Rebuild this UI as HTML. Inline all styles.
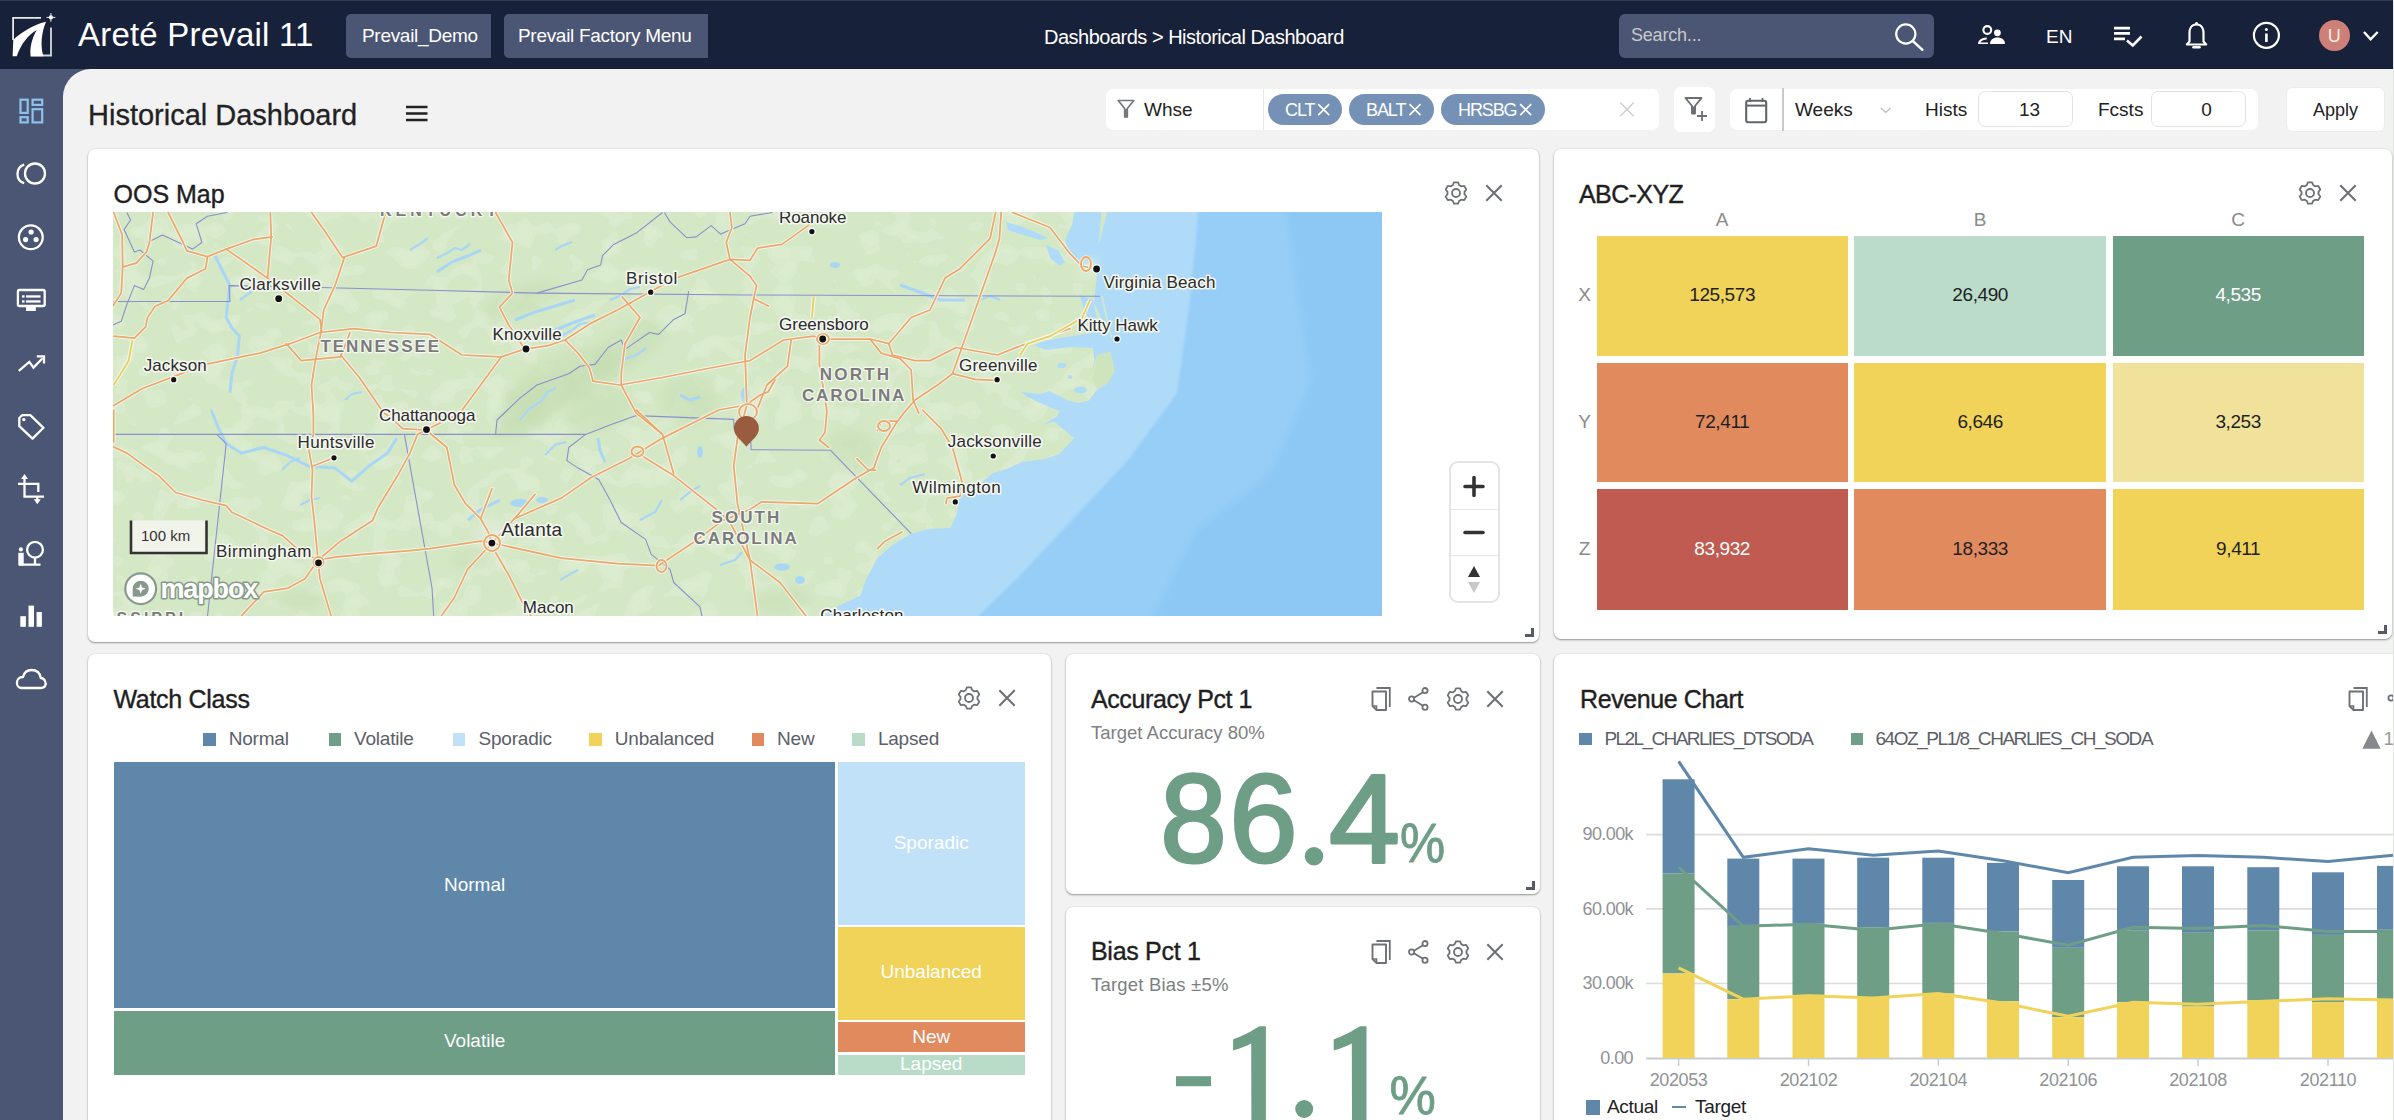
<!DOCTYPE html>
<html><head><meta charset="utf-8">
<style>
*{box-sizing:border-box;margin:0;padding:0}
html,body{width:2394px;height:1120px;overflow:hidden;background:#f2f2f2;font-family:"Liberation Sans",sans-serif;color:#222}
.abs{position:absolute}
#hdr{position:absolute;left:0;top:0;width:2394px;height:69px;background:#18213a;border-top:1px solid #343c50}
#side{position:absolute;left:0;top:69px;width:63px;height:1051px;background:#4b5675}
#main{position:absolute;left:63px;top:69px;width:2331px;height:1051px;background:#f2f2f2;border-top-left-radius:28px}
.hbtn{position:absolute;top:13px;height:44px;background:#4b5675;border-radius:5px 0 0 5px;color:#fff;font-size:19px;letter-spacing:-0.3px;line-height:44px;padding-left:16px}
.panel{position:absolute;background:#fff;border-radius:7px;box-shadow:0 1px 2px rgba(0,0,0,.38),0 0 2px rgba(0,0,0,.10)}
.ptitle{position:absolute;font-size:25px;color:#1f1f1f;letter-spacing:0px;white-space:nowrap;-webkit-text-stroke:0.35px #1f1f1f}
.grip{position:absolute;width:9px;height:9px;border-right:3px solid #555a66;border-bottom:3px solid #555a66}
.fbox{position:absolute;background:#fff;border-radius:7px}
.chip{position:absolute;top:94px;height:31px;border-radius:16px;background:#7591b6;color:#fff;font-size:18px;line-height:32px;padding-left:17px;letter-spacing:-1.1px}
.lbl{position:absolute;white-space:nowrap}
</style></head><body>

<div id="hdr">
<svg class="abs" style="left:8px;top:9px" width="52" height="52" viewBox="0 0 52 52">
<path d="M33,7.8 H5.1 V30" fill="none" stroke="#e8e8e8" stroke-width="1.8"/>
<path d="M43,17.6 V45.5 H22.7" fill="none" stroke="#d8d8d8" stroke-width="1.8"/>
<path d="M38,11.8 C25,15 14,22 5.3,29.7 L4.6,46.2 L8.8,46.2 C13,34 20,25 28.8,20 C24,28 21.5,38 22.7,46.2 L35.3,46.2 C32.5,36 33,24 38,11.8 Z" fill="#fff"/>
<circle cx="42.9" cy="7.4" r="2.1" fill="#fff"/>
<path d="M42.9,3 V11.8 M38.5,7.4 H47.3" stroke="#fff" stroke-width="0.9"/>
</svg>
<div class="lbl" style="left:78px;top:15px;font-size:33px;color:#fff;letter-spacing:0.2px;line-height:38px">Areté Prevail 11</div>
<div class="hbtn" style="left:346px;width:145px">Prevail_Demo</div>
<div class="hbtn" style="left:504px;width:204px;padding-left:14px">Prevail Factory Menu</div>
<div class="lbl" style="left:1044px;top:23.5px;font-size:20px;color:#fff;letter-spacing:-0.5px;line-height:24px">Dashboards &gt; Historical Dashboard</div>
<div class="abs" style="left:1619px;top:13px;width:315px;height:44px;background:#4b5675;border-radius:6px"></div>
<div class="lbl" style="left:1631px;top:23px;font-size:18px;color:#c9c9c9;letter-spacing:-0.2px;line-height:22px">Search...</div>
<svg class="abs" style="left:1890px;top:18px" width="40" height="36" viewBox="0 0 40 36">
<circle cx="15.8" cy="15" r="9.6" fill="none" stroke="#fff" stroke-width="2.2"/>
<path d="M22.8,22 L32.5,30.8" stroke="#fff" stroke-width="2.4" stroke-linecap="round"/>
</svg>
<svg class="abs" style="left:1975px;top:21.3px" width="32" height="24" viewBox="0 0 32 24">
<circle cx="12.3" cy="8" r="3.9" fill="none" stroke="#fff" stroke-width="2.1"/>
<circle cx="22.4" cy="10.8" r="3.4" fill="#fff"/>
<path d="M15,22 C15,18 18,15.5 22.5,15.5 C27,15.5 30,18 30,22 Z" fill="#fff"/>
<path d="M3,22 C3,18.5 6,15.8 12,15.6 L11.5,17.5 C7.5,17.8 5.6,19.5 5.3,20.5 L13,20.5 L13,22 Z" fill="#fff"/>
</svg>
<div class="lbl" style="left:2046px;top:24.5px;font-size:19px;color:#fff;line-height:22px">EN</div>
<svg class="abs" style="left:2110px;top:21px" width="36" height="26" viewBox="0 0 36 26">
<path d="M4,6.2 H20 M4,11.4 H20 M4,16.9 H15" stroke="#fff" stroke-width="2.8"/>
<path d="M17,18.5 L22.8,23.5 L31.5,14.5" fill="none" stroke="#fff" stroke-width="2.6"/>
</svg>
<svg class="abs" style="left:2182px;top:19px" width="30" height="32" viewBox="0 0 30 32">
<path d="M14.5,4.5 C9,4.5 7.5,9 7.5,13 V21.5 L4.8,24.5 H24.2 L21.5,21.5 V13 C21.5,9 20,4.5 14.5,4.5 Z" fill="none" stroke="#fff" stroke-width="2.2" stroke-linejoin="round"/>
<circle cx="14.5" cy="3.6" r="1.6" fill="#fff"/>
<path d="M11.5,27.3 H17.5" stroke="#fff" stroke-width="2.6" stroke-linecap="round"/>
</svg>
<svg class="abs" style="left:2250px;top:18px" width="33" height="33" viewBox="0 0 33 33">
<circle cx="16.4" cy="16.3" r="12.5" fill="none" stroke="#fff" stroke-width="2.2"/>
<circle cx="16.4" cy="10.6" r="1.5" fill="#fff"/>
<path d="M16.4,14.5 V23" stroke="#fff" stroke-width="2.6"/>
</svg>
<div class="abs" style="left:2318.5px;top:19px;width:31.4px;height:31.4px;border-radius:50%;background:#cd7f78"></div>
<div class="lbl" style="left:2318.5px;top:23.5px;width:31.4px;text-align:center;font-size:18px;color:#f7efdc;line-height:22px">U</div>
<svg class="abs" style="left:2360px;top:24.5px" width="22" height="18" viewBox="0 0 22 18">
<path d="M4,6 L10.6,13.3 L17.7,6" fill="none" stroke="#fff" stroke-width="2.4"/>
</svg>
</div>


<div id="side"></div>
<div class="abs" style="left:60px;top:69px;width:40px;height:40px;background:#4b5675"></div>
<svg class="abs" style="left:0;top:69px" width="63" height="660" viewBox="0 69 63 660">
<g fill="none" stroke="#8ec2ea" stroke-width="2.2">
<rect x="20.5" y="99.7" width="7.2" height="13.2"/>
<rect x="32.6" y="99.7" width="9.6" height="5.2"/>
<rect x="20.5" y="117.2" width="7.2" height="5.2"/>
<rect x="32.6" y="109.2" width="9.6" height="13.2"/>
</g>
<g fill="none" stroke="#fff" stroke-width="2.3">
<circle cx="35" cy="173.5" r="10"/>
<path d="M24.2,164.6 A9.8,9.8 0 0 0 24.2,183.2"/>
<circle cx="30.8" cy="237.3" r="11.9"/>
<rect x="17.9" y="290" width="26.8" height="16" rx="1.5"/>
<path d="M18.8,370.8 L29.3,361.9 L33.5,367.6 L42.5,358.3"/>
<path d="M36.8,356.3 H44 V363.5" />
<path d="M19.3,418 L19.3,426.2 L32.5,438.6 L43.5,427.8 L30.3,415.2 L22,415.2 Z" stroke-linejoin="round"/>
<path d="M18,483.8 H38.3 V492 M24.5,478 V496.6 H44" />
<circle cx="35" cy="549.7" r="7.9"/>
<path d="M35,557.6 V564.2 M19,564.6 H40.5"/>
<path d="M21.5,688 H40.5 C45,688 46.8,684.5 45,681 C44,678.8 42.5,678 40.8,678 C40,672.5 36.2,670 31.5,670 C27,670 24,673 23,677 C19,677 16.9,679.8 16.9,682.8 C16.9,685.8 19,688 21.5,688 Z" stroke-linejoin="round"/>
</g>
<g fill="#fff">
<circle cx="31.1" cy="232" r="2.6"/><circle cx="25.6" cy="239.6" r="2.6"/><circle cx="36.1" cy="239.6" r="2.6"/>
<rect x="22" y="295.3" width="2.6" height="2.3"/><rect x="26" y="295.3" width="14.5" height="2.3"/>
<rect x="22" y="300.3" width="2.6" height="2.3"/><rect x="26" y="300.3" width="14.5" height="2.3"/>
<rect x="26" y="307" width="9.8" height="4"/>
<circle cx="23.8" cy="419.6" r="1.7"/>
<path d="M24.5,474 L28,479 L21,479 Z M37.3,504.3 L33.8,499.3 L40.8,499.3 Z"/><rect x="36.2" y="496" width="2.2" height="4"/>
<circle cx="20.9" cy="549.4" r="2.1"/>
<rect x="18.3" y="552.8" width="5.4" height="12.6"/>
<rect x="20.3" y="616.2" width="5.6" height="10.6"/>
<rect x="28.5" y="605.6" width="5.5" height="21.2"/>
<rect x="36.6" y="612" width="5.3" height="14.8"/>
</g>
</svg>
<div id="main"></div>
<div class="lbl" style="left:88px;top:98px;font-size:29px;color:#222;line-height:34px;-webkit-text-stroke:0.3px #222">Historical Dashboard</div>
<svg class="abs" style="left:400px;top:100px" width="34" height="28" viewBox="0 0 34 28">
<path d="M6,7 H27.5 M6,13.5 H27.5 M6,20 H27.5" stroke="#222" stroke-width="2.4"/>
</svg>
<!-- filter bar -->
<div class="fbox" style="left:1106px;top:89px;width:553px;height:41px"></div>
<div class="abs" style="left:1263px;top:89px;width:1px;height:41px;background:#e8e8e8"></div>
<svg class="abs" style="left:1114px;top:96px" width="24" height="26" viewBox="0 0 24 26">
<path d="M4.2,4.5 H19.8 L13.3,12.5 V21 H10.7 V12.5 Z" fill="none" stroke="#76787c" stroke-width="1.7" stroke-linejoin="round"/>
<rect x="10.6" y="13" width="2.8" height="8.2" fill="#76787c"/>
</svg>
<div class="lbl" style="left:1144px;top:99px;font-size:19px;color:#222;line-height:22px">Whse</div>
<div class="chip" style="left:1268px;width:74px">CLT</div>
<div class="chip" style="left:1349px;width:85px">BALT</div>
<div class="chip" style="left:1441px;width:104px">HRSBG</div>
<svg class="abs" style="left:1268px;top:94px" width="280" height="31" viewBox="0 0 280 31">
<path d="M50.2,10.2 L61.2,21.2 M61.2,10.2 L50.2,21.2 M141.5,10.2 L152.5,21.2 M152.5,10.2 L141.5,21.2 M252.2,10.2 L263.2,21.2 M263.2,10.2 L252.2,21.2" stroke="#fff" stroke-width="1.7"/>
</svg>
<svg class="abs" style="left:1614px;top:97px" width="26" height="26" viewBox="0 0 26 26">
<path d="M6.2,5.5 L19.8,19.2 M19.8,5.5 L6.2,19.2" stroke="#cfcfcf" stroke-width="1.6"/>
</svg>
<div class="fbox" style="left:1674px;top:87px;width:41px;height:45px"></div>
<svg class="abs" style="left:1674px;top:87px" width="41" height="45" viewBox="0 0 41 45">
<path d="M11.5,11 H27.5 L21,19 V26.5 H18 V19 Z" fill="none" stroke="#6b6f75" stroke-width="1.9" stroke-linejoin="round"/>
<rect x="17.9" y="19.5" width="3.3" height="7.5" fill="#6b6f75"/>
<path d="M23,29 H33 M28,24 V34" stroke="#6b6f75" stroke-width="1.8"/>
</svg>
<div class="fbox" style="left:1730px;top:89px;width:528px;height:41px"></div>
<div class="abs" style="left:1782px;top:88px;width:1.5px;height:43px;background:#c8c8c8"></div>
<svg class="abs" style="left:1740px;top:92px" width="34" height="36" viewBox="0 0 34 36">
<rect x="6.2" y="8.8" width="20" height="21.4" rx="2" fill="none" stroke="#60646b" stroke-width="2.1"/>
<path d="M6.2,13.6 H26.2" stroke="#60646b" stroke-width="2"/>
<path d="M10,6 V10 M22.5,6 V10" stroke="#60646b" stroke-width="1.8"/>
</svg>
<div class="lbl" style="left:1795px;top:99px;font-size:19px;color:#222;line-height:22px">Weeks</div>
<svg class="abs" style="left:1876px;top:100px" width="20" height="20" viewBox="0 0 20 20">
<path d="M5,8 L9.7,12.5 L14.5,8" fill="none" stroke="#b8bcbc" stroke-width="1.2"/>
</svg>
<div class="lbl" style="left:1925px;top:99px;font-size:19px;color:#222;line-height:22px">Hists</div>
<div class="abs" style="left:1978px;top:91px;width:95px;height:36px;border:1px solid #e2e2e2;border-radius:7px"></div>
<div class="lbl" style="left:1982px;top:99px;width:95px;text-align:center;font-size:19px;color:#222;line-height:22px">13</div>
<div class="lbl" style="left:2098px;top:99px;font-size:19px;color:#222;line-height:22px">Fcsts</div>
<div class="abs" style="left:2151px;top:91px;width:95px;height:36px;border:1px solid #e2e2e2;border-radius:7px"></div>
<div class="lbl" style="left:2159px;top:99px;width:95px;text-align:center;font-size:19px;color:#222;line-height:22px">0</div>
<div class="fbox" style="left:2286px;top:87px;width:99px;height:45px;border:1px solid #ececec"></div>
<div class="lbl" style="left:2286px;top:99px;width:99px;text-align:center;font-size:18px;color:#222;line-height:22px">Apply</div>

<div class="panel" style="left:88px;top:149px;width:1451px;height:493px"></div><div class="panel" style="left:1554px;top:149px;width:838px;height:490px"></div><div class="panel" style="left:88px;top:654px;width:963px;height:486px"></div><div class="panel" style="left:1066px;top:654px;width:474px;height:240px"></div><div class="panel" style="left:1066px;top:907px;width:474px;height:233px"></div><div class="panel" style="left:1554px;top:654px;width:866px;height:486px"></div><div class="lbl" style="left:113.5px;top:181.8px;font-size:25px;line-height:25px;color:#1f1f1f;-webkit-text-stroke:0.4px #1f1f1f;">OOS Map</div><div class="lbl" style="left:1579.0px;top:181.5px;font-size:25px;line-height:25px;color:#1f1f1f;-webkit-text-stroke:0.4px #1f1f1f;letter-spacing:-0.6px;">ABC-XYZ</div><div class="lbl" style="left:113.5px;top:687.4px;font-size:25px;line-height:25px;color:#1f1f1f;-webkit-text-stroke:0.4px #1f1f1f;letter-spacing:-0.3px;">Watch Class</div><div class="lbl" style="left:1091.0px;top:687.4px;font-size:25px;line-height:25px;color:#1f1f1f;-webkit-text-stroke:0.4px #1f1f1f;letter-spacing:-0.4px;">Accuracy Pct 1</div><div class="lbl" style="left:1091.0px;top:939.3px;font-size:25px;line-height:25px;color:#1f1f1f;-webkit-text-stroke:0.4px #1f1f1f;letter-spacing:-0.3px;">Bias Pct 1</div><div class="lbl" style="left:1580.0px;top:687.4px;font-size:25px;line-height:25px;color:#1f1f1f;-webkit-text-stroke:0.4px #1f1f1f;letter-spacing:-0.4px;">Revenue Chart</div><svg class="abs" style="left:1440.5px;top:177.5px" width="30" height="30" viewBox="1440.5 177.5 30 30"><path d="M1452.23,184.76 L1453.44,181.80 L1457.56,181.80 L1458.77,184.76 L1459.83,185.01 L1460.56,185.80 L1463.74,185.37 L1465.80,188.93 L1463.84,191.46 L1464.15,192.50 L1463.84,193.54 L1465.80,196.07 L1463.74,199.63 L1460.56,199.20 L1459.83,199.99 L1458.77,200.24 L1457.56,203.20 L1453.44,203.20 L1452.23,200.24 L1451.17,199.99 L1450.44,199.20 L1447.26,199.63 L1445.20,196.07 L1447.16,193.54 L1446.85,192.50 L1447.16,191.46 L1445.20,188.93 L1447.26,185.37 L1450.44,185.80 L1451.17,185.01 Z" fill="none" stroke="#6d7177" stroke-width="1.8" stroke-linejoin="round"/><circle cx="1455.5" cy="192.5" r="4.0" fill="none" stroke="#6d7177" stroke-width="1.8"/></svg><svg class="abs" style="left:1482px;top:180.5px" width="24" height="24" viewBox="1482 180.5 24 24"><path d="M1486.3,184.8 L1501.7,200.2 M1501.7,184.8 L1486.3,200.2" stroke="#6d7177" stroke-width="2.1"/></svg><svg class="abs" style="left:2295px;top:177.5px" width="30" height="30" viewBox="2295 177.5 30 30"><path d="M2306.73,184.76 L2307.94,181.80 L2312.06,181.80 L2313.27,184.76 L2314.33,185.01 L2315.06,185.80 L2318.24,185.37 L2320.30,188.93 L2318.34,191.46 L2318.65,192.50 L2318.34,193.54 L2320.30,196.07 L2318.24,199.63 L2315.06,199.20 L2314.33,199.99 L2313.27,200.24 L2312.06,203.20 L2307.94,203.20 L2306.73,200.24 L2305.67,199.99 L2304.94,199.20 L2301.76,199.63 L2299.70,196.07 L2301.66,193.54 L2301.35,192.50 L2301.66,191.46 L2299.70,188.93 L2301.76,185.37 L2304.94,185.80 L2305.67,185.01 Z" fill="none" stroke="#6d7177" stroke-width="1.8" stroke-linejoin="round"/><circle cx="2310" cy="192.5" r="4.0" fill="none" stroke="#6d7177" stroke-width="1.8"/></svg><svg class="abs" style="left:2335.8px;top:180.5px" width="24" height="24" viewBox="2335.8 180.5 24 24"><path d="M2340.1000000000004,184.8 L2355.5,200.2 M2355.5,184.8 L2340.1000000000004,200.2" stroke="#6d7177" stroke-width="2.1"/></svg><svg class="abs" style="left:953.8px;top:683.2px" width="30" height="30" viewBox="953.8 683.2 30 30"><path d="M965.53,690.46 L966.74,687.50 L970.86,687.50 L972.07,690.46 L973.13,690.71 L973.86,691.50 L977.04,691.07 L979.10,694.63 L977.14,697.16 L977.45,698.20 L977.14,699.24 L979.10,701.77 L977.04,705.33 L973.86,704.90 L973.13,705.69 L972.07,705.94 L970.86,708.90 L966.74,708.90 L965.53,705.94 L964.47,705.69 L963.74,704.90 L960.56,705.33 L958.50,701.77 L960.46,699.24 L960.15,698.20 L960.46,697.16 L958.50,694.63 L960.56,691.07 L963.74,691.50 L964.47,690.71 Z" fill="none" stroke="#6d7177" stroke-width="1.8" stroke-linejoin="round"/><circle cx="968.8" cy="698.2" r="4.0" fill="none" stroke="#6d7177" stroke-width="1.8"/></svg><svg class="abs" style="left:995px;top:686.2px" width="24" height="24" viewBox="995 686.2 24 24"><path d="M999.3,690.5 L1014.7,705.9000000000001 M1014.7,690.5 L999.3,705.9000000000001" stroke="#6d7177" stroke-width="2.1"/></svg><svg class="abs" style="left:1371px;top:685px" width="22" height="27" viewBox="0 0 22 27"><path d="M5.5,3 H18.8 V22" fill="none" stroke="#6d7177" stroke-width="1.8"/><path d="M1.5,6.5 H15 V25 H5.5 L1.5,21 Z" fill="none" stroke="#6d7177" stroke-width="1.9" stroke-linejoin="round"/><path d="M1.5,21 H5.5 V25" fill="none" stroke="#6d7177" stroke-width="1.6"/></svg><svg class="abs" style="left:1408px;top:686.5px" width="22" height="24" viewBox="0 0 22 24"><path d="M4,12 L17,4 M4,12 L17,20" stroke="#6d7177" stroke-width="1.8"/><circle cx="3.6" cy="12" r="2.6" fill="#fff" stroke="#6d7177" stroke-width="1.8"/><circle cx="17" cy="3.6" r="2.6" fill="#fff" stroke="#6d7177" stroke-width="1.8"/><circle cx="17" cy="20.3" r="2.6" fill="#fff" stroke="#6d7177" stroke-width="1.8"/></svg><svg class="abs" style="left:1442.7px;top:683.5px" width="30" height="30" viewBox="1442.7 683.5 30 30"><path d="M1454.43,690.76 L1455.64,687.80 L1459.76,687.80 L1460.97,690.76 L1462.03,691.01 L1462.76,691.80 L1465.94,691.37 L1468.00,694.93 L1466.04,697.46 L1466.35,698.50 L1466.04,699.54 L1468.00,702.07 L1465.94,705.63 L1462.76,705.20 L1462.03,705.99 L1460.97,706.24 L1459.76,709.20 L1455.64,709.20 L1454.43,706.24 L1453.37,705.99 L1452.64,705.20 L1449.46,705.63 L1447.40,702.07 L1449.36,699.54 L1449.05,698.50 L1449.36,697.46 L1447.40,694.93 L1449.46,691.37 L1452.64,691.80 L1453.37,691.01 Z" fill="none" stroke="#6d7177" stroke-width="1.8" stroke-linejoin="round"/><circle cx="1457.7" cy="698.5" r="4.0" fill="none" stroke="#6d7177" stroke-width="1.8"/></svg><svg class="abs" style="left:1483px;top:686.9px" width="24" height="24" viewBox="1483 686.9 24 24"><path d="M1487.3,691.1999999999999 L1502.7,706.6 M1502.7,691.1999999999999 L1487.3,706.6" stroke="#6d7177" stroke-width="2.1"/></svg><svg class="abs" style="left:1371px;top:938px" width="22" height="27" viewBox="0 0 22 27"><path d="M5.5,3 H18.8 V22" fill="none" stroke="#6d7177" stroke-width="1.8"/><path d="M1.5,6.5 H15 V25 H5.5 L1.5,21 Z" fill="none" stroke="#6d7177" stroke-width="1.9" stroke-linejoin="round"/><path d="M1.5,21 H5.5 V25" fill="none" stroke="#6d7177" stroke-width="1.6"/></svg><svg class="abs" style="left:1408px;top:939.5px" width="22" height="24" viewBox="0 0 22 24"><path d="M4,12 L17,4 M4,12 L17,20" stroke="#6d7177" stroke-width="1.8"/><circle cx="3.6" cy="12" r="2.6" fill="#fff" stroke="#6d7177" stroke-width="1.8"/><circle cx="17" cy="3.6" r="2.6" fill="#fff" stroke="#6d7177" stroke-width="1.8"/><circle cx="17" cy="20.3" r="2.6" fill="#fff" stroke="#6d7177" stroke-width="1.8"/></svg><svg class="abs" style="left:1442.7px;top:936.5px" width="30" height="30" viewBox="1442.7 936.5 30 30"><path d="M1454.43,943.76 L1455.64,940.80 L1459.76,940.80 L1460.97,943.76 L1462.03,944.01 L1462.76,944.80 L1465.94,944.37 L1468.00,947.93 L1466.04,950.46 L1466.35,951.50 L1466.04,952.54 L1468.00,955.07 L1465.94,958.63 L1462.76,958.20 L1462.03,958.99 L1460.97,959.24 L1459.76,962.20 L1455.64,962.20 L1454.43,959.24 L1453.37,958.99 L1452.64,958.20 L1449.46,958.63 L1447.40,955.07 L1449.36,952.54 L1449.05,951.50 L1449.36,950.46 L1447.40,947.93 L1449.46,944.37 L1452.64,944.80 L1453.37,944.01 Z" fill="none" stroke="#6d7177" stroke-width="1.8" stroke-linejoin="round"/><circle cx="1457.7" cy="951.5" r="4.0" fill="none" stroke="#6d7177" stroke-width="1.8"/></svg><svg class="abs" style="left:1483px;top:939.9px" width="24" height="24" viewBox="1483 939.9 24 24"><path d="M1487.3,944.1999999999999 L1502.7,959.6 M1502.7,944.1999999999999 L1487.3,959.6" stroke="#6d7177" stroke-width="2.1"/></svg><svg class="abs" style="left:2348px;top:685px" width="22" height="27" viewBox="0 0 22 27"><path d="M5.5,3 H18.8 V22" fill="none" stroke="#6d7177" stroke-width="1.8"/><path d="M1.5,6.5 H15 V25 H5.5 L1.5,21 Z" fill="none" stroke="#6d7177" stroke-width="1.9" stroke-linejoin="round"/><path d="M1.5,21 H5.5 V25" fill="none" stroke="#6d7177" stroke-width="1.6"/></svg><svg class="abs" style="left:2384px;top:690px" width="10" height="16"><circle cx="7" cy="8" r="2.6" fill="#fff" stroke="#6d7177" stroke-width="1.8"/></svg><div class="grip" style="left:1525px;top:628px"></div><div class="grip" style="left:2378px;top:625px"></div><div class="grip" style="left:1526px;top:881px"></div><div class="abs" style="left:1596.5px;top:235.6px;width:251.5px;height:120.4px;background:#f0d358"></div><div class="lbl" style="left:1597.2px;top:285.2px;width:250px;text-align:center;font-size:19px;line-height:19px;color:#1f1f1f;letter-spacing:-0.4px;">125,573</div><div class="abs" style="left:1854.3px;top:235.6px;width:251.7px;height:120.4px;background:#bcdccb"></div><div class="lbl" style="left:1855.2px;top:285.2px;width:250px;text-align:center;font-size:19px;line-height:19px;color:#1f1f1f;letter-spacing:-0.4px;">26,490</div><div class="abs" style="left:2112.5px;top:235.6px;width:251.5px;height:120.4px;background:#6e9e86"></div><div class="lbl" style="left:2113.2px;top:285.2px;width:250px;text-align:center;font-size:19px;line-height:19px;color:#fff;letter-spacing:-0.4px;">4,535</div><div class="abs" style="left:1596.5px;top:362.7px;width:251.5px;height:119.8px;background:#e08a5e"></div><div class="lbl" style="left:1597.2px;top:412.0px;width:250px;text-align:center;font-size:19px;line-height:19px;color:#1f1f1f;letter-spacing:-0.4px;">72,411</div><div class="abs" style="left:1854.3px;top:362.7px;width:251.7px;height:119.8px;background:#f0d358"></div><div class="lbl" style="left:1855.2px;top:412.0px;width:250px;text-align:center;font-size:19px;line-height:19px;color:#1f1f1f;letter-spacing:-0.4px;">6,646</div><div class="abs" style="left:2112.5px;top:362.7px;width:251.5px;height:119.8px;background:#f0e29a"></div><div class="lbl" style="left:2113.2px;top:412.0px;width:250px;text-align:center;font-size:19px;line-height:19px;color:#1f1f1f;letter-spacing:-0.4px;">3,253</div><div class="abs" style="left:1596.5px;top:489.3px;width:251.5px;height:120.3px;background:#c05b51"></div><div class="lbl" style="left:1597.2px;top:538.9px;width:250px;text-align:center;font-size:19px;line-height:19px;color:#fff;letter-spacing:-0.4px;">83,932</div><div class="abs" style="left:1854.3px;top:489.3px;width:251.7px;height:120.3px;background:#e08a5e"></div><div class="lbl" style="left:1855.2px;top:538.9px;width:250px;text-align:center;font-size:19px;line-height:19px;color:#1f1f1f;letter-spacing:-0.4px;">18,333</div><div class="abs" style="left:2112.5px;top:489.3px;width:251.5px;height:120.3px;background:#f0d358"></div><div class="lbl" style="left:2113.2px;top:538.9px;width:250px;text-align:center;font-size:19px;line-height:19px;color:#1f1f1f;letter-spacing:-0.4px;">9,411</div><div class="lbl" style="left:1702.2px;top:209.9px;width:40px;text-align:center;font-size:19px;line-height:19px;color:#8a8a8a;">A</div><div class="lbl" style="left:1960.2px;top:209.9px;width:40px;text-align:center;font-size:19px;line-height:19px;color:#8a8a8a;">B</div><div class="lbl" style="left:2218.2px;top:209.9px;width:40px;text-align:center;font-size:19px;line-height:19px;color:#8a8a8a;">C</div><div class="lbl" style="left:1569.5px;top:285.2px;width:30px;text-align:center;font-size:19px;line-height:19px;color:#8a8a8a;">X</div><div class="lbl" style="left:1569.5px;top:412.0px;width:30px;text-align:center;font-size:19px;line-height:19px;color:#8a8a8a;">Y</div><div class="lbl" style="left:1569.5px;top:538.9px;width:30px;text-align:center;font-size:19px;line-height:19px;color:#8a8a8a;">Z</div><div class="abs" style="left:114.3px;top:762.1px;width:721.2px;height:246.4px;background:#5e87a9"></div><div class="abs" style="left:114.3px;top:1010.5px;width:721.2px;height:64.5px;background:#6e9e86"></div><div class="abs" style="left:837.6px;top:762.1px;width:187.2px;height:162.9px;background:#c1e1f8"></div><div class="abs" style="left:837.6px;top:927px;width:187.2px;height:93.0px;background:#f0d358"></div><div class="abs" style="left:837.6px;top:1022.3px;width:187.2px;height:30.2px;background:#e08a5e"></div><div class="abs" style="left:837.6px;top:1054.6px;width:187.2px;height:20.4px;background:#b8dcc8"></div><div class="lbl" style="left:324.6px;top:874.6px;width:300px;text-align:center;font-size:19px;line-height:19px;color:#fff;">Normal</div><div class="lbl" style="left:324.6px;top:1030.9px;width:300px;text-align:center;font-size:19px;line-height:19px;color:#fff;">Volatile</div><div class="lbl" style="left:841.2px;top:832.9px;width:180px;text-align:center;font-size:19px;line-height:19px;color:#fff;">Sporadic</div><div class="lbl" style="left:841.2px;top:962.4px;width:180px;text-align:center;font-size:19px;line-height:19px;color:#fff;">Unbalanced</div><div class="lbl" style="left:841.2px;top:1026.7px;width:180px;text-align:center;font-size:19px;line-height:19px;color:#fff;">New</div><div class="lbl" style="left:841.2px;top:1053.7px;width:180px;text-align:center;font-size:19px;line-height:19px;color:#fff;">Lapsed</div><div class="abs" style="left:203px;top:733px;width:12.5px;height:12.7px;background:#5e87a9"></div><div class="lbl" style="left:228.7px;top:728.9px;font-size:19px;line-height:19px;color:#5b6068;letter-spacing:-0.2px;">Normal</div><div class="abs" style="left:328.5px;top:733px;width:12.5px;height:12.7px;background:#6e9e86"></div><div class="lbl" style="left:354.0px;top:728.9px;font-size:19px;line-height:19px;color:#5b6068;letter-spacing:-0.2px;">Volatile</div><div class="abs" style="left:452.8px;top:733px;width:12.5px;height:12.7px;background:#c1e1f8"></div><div class="lbl" style="left:478.5px;top:728.9px;font-size:19px;line-height:19px;color:#5b6068;letter-spacing:-0.2px;">Sporadic</div><div class="abs" style="left:589px;top:733px;width:12.5px;height:12.7px;background:#f0d358"></div><div class="lbl" style="left:614.8px;top:728.9px;font-size:19px;line-height:19px;color:#5b6068;letter-spacing:-0.2px;">Unbalanced</div><div class="abs" style="left:751.5px;top:733px;width:12.5px;height:12.7px;background:#e08a5e"></div><div class="lbl" style="left:777.0px;top:728.9px;font-size:19px;line-height:19px;color:#5b6068;letter-spacing:-0.2px;">New</div><div class="abs" style="left:852px;top:733px;width:12.5px;height:12.7px;background:#b8dcc8"></div><div class="lbl" style="left:877.9px;top:728.9px;font-size:19px;line-height:19px;color:#5b6068;letter-spacing:-0.2px;">Lapsed</div><div class="lbl" style="left:1091.0px;top:724.3px;font-size:18.5px;line-height:18.5px;color:#7d7f83;letter-spacing:0px;">Target Accuracy 80%</div><div class="lbl" style="left:1091.0px;top:976.3px;font-size:18.5px;line-height:18.5px;color:#7d7f83;letter-spacing:0.2px;">Target Bias ±5%</div><svg class="abs" style="left:1066px;top:654px" width="474" height="466" viewBox="1066 654 474 466"><g font-family="Liberation Sans, sans-serif" fill="#6e9e86" stroke="#6e9e86" stroke-linejoin="round"><text transform="translate(1160.20,861.80) scale(0.942,0.990)" font-size="127" stroke-width="3.11">8</text><text transform="translate(1229.30,861.80) scale(0.968,0.990)" font-size="127" stroke-width="3.06">6</text><text transform="translate(1329.00,862.80) scale(1.005,0.992)" font-size="127" stroke-width="3.00">4</text><text transform="translate(1400.00,862.00) scale(0.890,0.967)" font-size="57" stroke-width="0.86">%</text><text transform="translate(1389.60,1114.30) scale(0.915,0.933)" font-size="57" stroke-width="0.87">%</text></g><circle cx="1314" cy="856.2" r="9.2" fill="#6e9e86"/><circle cx="1304.2" cy="1109" r="9" fill="#6e9e86"/><rect x="1176" y="1076.2" width="35" height="10" fill="#6e9e86"/><path transform="translate(0,0)" d="M1265.9,1026.2 L1259.4,1026.2 C1252,1031 1242,1036 1233.1,1039.4 L1233.1,1050.6 C1240,1049 1246,1046 1251.2,1043.6 L1251.4,1125 L1265.9,1125 Z" fill="#6e9e86"/><path transform="translate(100.6,0)" d="M1265.9,1026.2 L1259.4,1026.2 C1252,1031 1242,1036 1233.1,1039.4 L1233.1,1050.6 C1240,1049 1246,1046 1251.2,1043.6 L1251.4,1125 L1265.9,1125 Z" fill="#6e9e86"/></svg><svg class="abs" style="left:1554px;top:654px" width="840" height="466" viewBox="1554 654 840 466"><path d="M1646,834.6 H2394" stroke="#dcdcdc" stroke-width="1.6"/><path d="M1646,908.9 H2394" stroke="#dcdcdc" stroke-width="1.6"/><path d="M1646,983.5 H2394" stroke="#dcdcdc" stroke-width="1.6"/><path d="M1646,1058.5 H2394" stroke="#c9cccf" stroke-width="1.8"/><rect x="1662.6" y="779.3" width="32" height="94.30000000000007" fill="#5e87a9"/><rect x="1662.6" y="873.6" width="32" height="99.89999999999998" fill="#6e9e86"/><rect x="1662.6" y="973.5" width="32" height="84.5" fill="#f0d358"/><rect x="1727.3" y="858.6" width="32" height="67.29999999999995" fill="#5e87a9"/><rect x="1727.3" y="925.9" width="32" height="73.30000000000007" fill="#6e9e86"/><rect x="1727.3" y="999.2" width="32" height="58.799999999999955" fill="#f0d358"/><rect x="1792.5" y="858.6" width="32" height="65.19999999999993" fill="#5e87a9"/><rect x="1792.5" y="923.8" width="32" height="71.10000000000002" fill="#6e9e86"/><rect x="1792.5" y="994.9" width="32" height="63.10000000000002" fill="#f0d358"/><rect x="1857.2" y="857.7" width="32" height="69.5" fill="#5e87a9"/><rect x="1857.2" y="927.2" width="32" height="70.69999999999993" fill="#6e9e86"/><rect x="1857.2" y="997.9" width="32" height="60.10000000000002" fill="#f0d358"/><rect x="1922.3" y="857.7" width="32" height="65.19999999999993" fill="#5e87a9"/><rect x="1922.3" y="922.9" width="32" height="70.70000000000005" fill="#6e9e86"/><rect x="1922.3" y="993.6" width="32" height="64.39999999999998" fill="#f0d358"/><rect x="1987" y="862.9" width="32" height="68.60000000000002" fill="#5e87a9"/><rect x="1987" y="931.5" width="32" height="69.79999999999995" fill="#6e9e86"/><rect x="1987" y="1001.3" width="32" height="56.700000000000045" fill="#f0d358"/><rect x="2052.2" y="880" width="32" height="67.79999999999995" fill="#5e87a9"/><rect x="2052.2" y="947.8" width="32" height="69.40000000000009" fill="#6e9e86"/><rect x="2052.2" y="1017.2" width="32" height="40.799999999999955" fill="#f0d358"/><rect x="2117" y="866.3" width="32" height="63.90000000000009" fill="#5e87a9"/><rect x="2117" y="930.2" width="32" height="72.0" fill="#6e9e86"/><rect x="2117" y="1002.2" width="32" height="55.799999999999955" fill="#f0d358"/><rect x="2182" y="866.3" width="32" height="66.5" fill="#5e87a9"/><rect x="2182" y="932.8" width="32" height="73.70000000000005" fill="#6e9e86"/><rect x="2182" y="1006.5" width="32" height="51.5" fill="#f0d358"/><rect x="2247.3" y="867.2" width="32" height="63.0" fill="#5e87a9"/><rect x="2247.3" y="930.2" width="32" height="69.79999999999995" fill="#6e9e86"/><rect x="2247.3" y="1000" width="32" height="58" fill="#f0d358"/><rect x="2312" y="872.3" width="32" height="62.60000000000002" fill="#5e87a9"/><rect x="2312" y="934.9" width="32" height="67.30000000000007" fill="#6e9e86"/><rect x="2312" y="1002.2" width="32" height="55.799999999999955" fill="#f0d358"/><rect x="2377" y="865.9" width="32" height="63.89999999999998" fill="#5e87a9"/><rect x="2377" y="929.8" width="32" height="69.40000000000009" fill="#6e9e86"/><rect x="2377" y="999.2" width="32" height="58.799999999999955" fill="#f0d358"/><polyline fill="none" stroke="#5e87a9" stroke-width="3" points="1678.6,761.3 1743.3,857.3 1808.5,848.7 1873.2,855.2 1938.3,850.9 2003,860.7 2068.2,872.7 2133,857.3 2198,855.6 2263.3,857.3 2328,861.6 2393,855.2"/><polyline fill="none" stroke="#6e9e86" stroke-width="3" points="1678.6,867.2 1743.3,926.3 1808.5,924.2 1873.2,930.2 1938.3,923.8 2003,933.6 2068.2,945.2 2133,927.2 2198,928.5 2263.3,925.5 2328,931.5 2393,931.5"/><polyline fill="none" stroke="#f0d358" stroke-width="3" points="1678.6,967.9 1743.3,999.2 1808.5,995.8 1873.2,997.9 1938.3,993.6 2003,1003 2068.2,1016.3 2133,1002.2 2198,1004.3 2263.3,1001.3 2328,998.8 2393,1000"/><path d="M1678.6,1059 V1066" stroke="#c9cccf" stroke-width="1.5"/><path d="M1808.5,1059 V1066" stroke="#c9cccf" stroke-width="1.5"/><path d="M1938.3,1059 V1066" stroke="#c9cccf" stroke-width="1.5"/><path d="M2068.2,1059 V1066" stroke="#c9cccf" stroke-width="1.5"/><path d="M2198,1059 V1066" stroke="#c9cccf" stroke-width="1.5"/><path d="M2328,1059 V1066" stroke="#c9cccf" stroke-width="1.5"/><path d="M2362.3,748.8 L2371.5,730.5 L2380.6,748.8 Z" fill="#85898d"/></svg><div class="lbl" style="left:1533.0px;top:825.2px;width:100px;text-align:right;font-size:18px;line-height:18px;color:#8f9295;letter-spacing:-0.6px;">90.00k</div><div class="lbl" style="left:1533.0px;top:899.5px;width:100px;text-align:right;font-size:18px;line-height:18px;color:#8f9295;letter-spacing:-0.6px;">60.00k</div><div class="lbl" style="left:1533.0px;top:974.1px;width:100px;text-align:right;font-size:18px;line-height:18px;color:#8f9295;letter-spacing:-0.6px;">30.00k</div><div class="lbl" style="left:1533.0px;top:1049.1px;width:100px;text-align:right;font-size:18px;line-height:18px;color:#8f9295;letter-spacing:-0.6px;">0.00</div><div class="lbl" style="left:1618.6px;top:1070.6px;width:120px;text-align:center;font-size:18px;line-height:18px;color:#8f9295;letter-spacing:-0.4px;">202053</div><div class="lbl" style="left:1748.5px;top:1070.6px;width:120px;text-align:center;font-size:18px;line-height:18px;color:#8f9295;letter-spacing:-0.4px;">202102</div><div class="lbl" style="left:1878.3px;top:1070.6px;width:120px;text-align:center;font-size:18px;line-height:18px;color:#8f9295;letter-spacing:-0.4px;">202104</div><div class="lbl" style="left:2008.2px;top:1070.6px;width:120px;text-align:center;font-size:18px;line-height:18px;color:#8f9295;letter-spacing:-0.4px;">202106</div><div class="lbl" style="left:2138.0px;top:1070.6px;width:120px;text-align:center;font-size:18px;line-height:18px;color:#8f9295;letter-spacing:-0.4px;">202108</div><div class="lbl" style="left:2268.0px;top:1070.6px;width:120px;text-align:center;font-size:18px;line-height:18px;color:#8f9295;letter-spacing:-0.4px;">202110</div><div class="abs" style="left:1579px;top:733px;width:12.6px;height:12.0px;background:#5e87a9"></div><div class="lbl" style="left:1604.5px;top:728.9px;font-size:19px;line-height:19px;color:#5b6068;letter-spacing:-1.6px;">PL2L_CHARLIES_DTSODA</div><div class="abs" style="left:1851px;top:733px;width:12.0px;height:12.0px;background:#6e9e86"></div><div class="lbl" style="left:1875.5px;top:728.9px;font-size:19px;line-height:19px;color:#5b6068;letter-spacing:-1.45px;">64OZ_PL1/8_CHARLIES_CH_SODA</div><div class="lbl" style="left:2383.5px;top:728.9px;font-size:19px;line-height:19px;color:#9a9a9a;">1</div><div class="abs" style="left:1586px;top:1100px;width:14.0px;height:14.5px;background:#5e87a9"></div><div class="lbl" style="left:1607.0px;top:1096.9px;font-size:19px;line-height:19px;color:#222;letter-spacing:-0.3px;">Actual</div><div class="abs" style="left:1672px;top:1106px;width:14px;height:2px;background:#5e87a9"></div><div class="lbl" style="left:1695.0px;top:1096.9px;font-size:19px;line-height:19px;color:#222;letter-spacing:-0.3px;">Target</div><div class="abs" style="left:2393px;top:0;width:1px;height:1120px;background:#e3e5e3"></div><svg class="abs" style="left:113px;top:212px" width="1269" height="404" viewBox="113 212 1269 404"><defs><filter id="bl" x="-20%" y="-20%" width="140%" height="140%"><feGaussianBlur stdDeviation="14"/></filter><filter id="bl2" x="-20%" y="-20%" width="140%" height="140%"><feGaussianBlur stdDeviation="4"/></filter></defs><rect x="113" y="212" width="1269" height="404" fill="#d5e8c6"/><filter id="tex" x="0" y="0" width="100%" height="100%"><feTurbulence type="fractalNoise" baseFrequency="0.035 0.045" numOctaves="2" seed="7"/><feColorMatrix type="matrix" values="0 0 0 0 0.78  0 0 0 0 0.88  0 0 0 0 0.71  0 0 0 -2.2 1.45"/><feComponentTransfer><feFuncA type="discrete" tableValues="0 0 0.55 0.8"/></feComponentTransfer></filter><rect x="113" y="212" width="1269" height="404" filter="url(#tex)" opacity="0.55"/><ellipse cx="540" cy="400" rx="45" ry="18" transform="rotate(-30 540 400)" fill="#c3dcb0" opacity="0.45" filter="url(#bl2)"/><ellipse cx="600" cy="375" rx="40" ry="15" transform="rotate(-35 600 375)" fill="#c3dcb0" opacity="0.45" filter="url(#bl2)"/><ellipse cx="520" cy="425" rx="30" ry="12" transform="rotate(-20 520 425)" fill="#c3dcb0" opacity="0.45" filter="url(#bl2)"/><ellipse cx="470" cy="560" rx="20" ry="10" transform="rotate(0 470 560)" fill="#c3dcb0" opacity="0.45" filter="url(#bl2)"/><ellipse cx="300" cy="600" rx="25" ry="10" transform="rotate(0 300 600)" fill="#c3dcb0" opacity="0.45" filter="url(#bl2)"/><ellipse cx="560" cy="380" rx="60" ry="25" transform="rotate(-25 560 380)" fill="#c3dcb0" opacity="0.45" filter="url(#bl2)"/><ellipse cx="630" cy="345" rx="40" ry="20" transform="rotate(-30 630 345)" fill="#c3dcb0" opacity="0.45" filter="url(#bl2)"/><ellipse cx="600" cy="410" rx="35" ry="20" transform="rotate(-20 600 410)" fill="#c3dcb0" opacity="0.45" filter="url(#bl2)"/><ellipse cx="690" cy="400" rx="30" ry="25" transform="rotate(0 690 400)" fill="#c3dcb0" opacity="0.45" filter="url(#bl2)"/><ellipse cx="520" cy="300" rx="40" ry="15" transform="rotate(-20 520 300)" fill="#c3dcb0" opacity="0.45" filter="url(#bl2)"/><ellipse cx="850" cy="450" rx="25" ry="20" transform="rotate(0 850 450)" fill="#c3dcb0" opacity="0.45" filter="url(#bl2)"/><ellipse cx="780" cy="600" rx="30" ry="15" transform="rotate(0 780 600)" fill="#c3dcb0" opacity="0.45" filter="url(#bl2)"/><polygon points="1109,205 1400,205 1400,630 818,630 825,616 840,605 860.6,595.6 866.2,578.7 877.5,558.1 892.5,545 911.2,533.7 928.1,529 950.6,528.1 956.2,515 960,496.2 978.7,485 991.9,473.7 1008.7,468.1 1021.8,462 1043.6,459.3 1059.6,453.9 1074.4,437.8 1070.4,435.2 1054.3,421.8 1043.6,424.5 1057,416.4 1059.6,411 1040,403 1028,397 1020,392 1041,394 1049,391 1057,395 1067.7,400.4 1078.4,403 1089,400.4 1097,389.6 1107.8,383 1114.5,371 1110.5,352 1097,354.8 1091.8,373.6 1094.5,360 1093,348 1070,347 1046,350 1034,345 1045,341 1060,338 1085,334 1100,330 1102.1,326 1099.8,314.5 1094,302.9 1095.2,291.3 1097.5,270.4 1092.9,264.6 1081.3,263.4 1075.5,258.8 1069.6,253 1065,240.2 1072,225.1 1075.5,205 1102,205 1098.7,244.8 1109,205" fill="#afdbf8"/><polygon points="1046,244.8 1058,250 1065,262 1060,266 1050,258" fill="#afdbf8"/><polygon points="1006,222 1020,226 1035,232 1048,238 1040,240 1020,234 1008,230" fill="#afdbf8"/><polygon points="1080,295 1093,300 1097,318 1090,322 1084,310" fill="#afdbf8"/><polyline fill="none" stroke="#d5e8c6" stroke-width="1.6" points="1102,296 1106,315 1111.4,337.7"/><polygon points="1097,354.8 1110.5,352 1114.5,371 1107.8,383 1097,389.6 1093,380" fill="#cde4bd"/><ellipse cx="1061.5" cy="365.5" rx="4.5" ry="2.8" fill="#afdbf8"/><ellipse cx="1080.5" cy="390" rx="6.5" ry="3.5" fill="#afdbf8"/><ellipse cx="1070" cy="377" rx="2.2" ry="2" fill="#afdbf8"/><filter id="bl1" x="-20%" y="-20%" width="140%" height="140%"><feGaussianBlur stdDeviation="1.5"/></filter><polygon points="1199,205 1400,205 1400,630 964,630 1019.6,576 1129,459 1177,393 1190,300" fill="#96cef7" filter="url(#bl1)"/><filter id="bl3" x="-20%" y="-20%" width="140%" height="140%"><feGaussianBlur stdDeviation="3"/></filter><polygon points="1285,205 1400,205 1400,630 1150,630 1153,616 1185,551 1196,530 1258,483 1271,470 1293,423 1310,380 1298,300" fill="#8dc8f5" filter="url(#bl3)"/><polyline fill="none" stroke="#a9d6f4" stroke-width="3" stroke-linejoin="round" points="215,255.6 222,270 230,285.6 228,300 226.2,317.5 232,328 239.4,336.2 237.5,355 231.9,373.7 230,392.5"/><polyline fill="none" stroke="#a9d6f4" stroke-width="3" stroke-linejoin="round" points="211.2,410 218.7,428.7 226.2,443.7 241.2,453.1 263.7,447.5 286.2,455 308.7,466.2 335,468.1 351.9,481.2 368.7,466.2 387.5,453.1 396.9,438.1"/><polyline fill="none" stroke="#a9d6f4" stroke-width="3" stroke-linejoin="round" points="437,272 452,262 470,255 481,250"/><polyline fill="none" stroke="#a9d6f4" stroke-width="3" stroke-linejoin="round" points="515,320 535,312 555,306 575,300"/><polyline fill="none" stroke="#a9d6f4" stroke-width="3" stroke-linejoin="round" points="555,330 575,322 595,315"/><polyline fill="none" stroke="#a9d6f4" stroke-width="3" stroke-linejoin="round" points="468,520 480,510 500,500"/><polyline fill="none" stroke="#a9d6f4" stroke-width="3" stroke-linejoin="round" points="598,438 600,450 605,462"/><polyline fill="none" stroke="#a9d6f4" stroke-width="3" stroke-linejoin="round" points="900,285 920,292 940,300 965,300"/><polyline fill="none" stroke="#a9d6f4" stroke-width="3" stroke-linejoin="round" points="680,395 690,400 700,397"/><polyline fill="none" stroke="#a9d6f4" stroke-width="2.2" stroke-linejoin="round" points="437,258 447,253 455,248 462,250 470,244"/><polyline fill="none" stroke="#a9d6f4" stroke-width="2.2" stroke-linejoin="round" points="555,250 562,246 572,242"/><polyline fill="none" stroke="#a9d6f4" stroke-width="2.2" stroke-linejoin="round" points="610,300 620,296 630,289 640,287"/><polyline fill="none" stroke="#a9d6f4" stroke-width="2.2" stroke-linejoin="round" points="560,337 572,330 580,324 592,322"/><polyline fill="none" stroke="#a9d6f4" stroke-width="2.2" stroke-linejoin="round" points="520,420 528,410 540,402 548,392 556,388"/><polyline fill="none" stroke="#a9d6f4" stroke-width="2.2" stroke-linejoin="round" points="545,455 555,445 566,442"/><polyline fill="none" stroke="#a9d6f4" stroke-width="2.2" stroke-linejoin="round" points="345,400 352,394 362,392"/><polyline fill="none" stroke="#a9d6f4" stroke-width="2.2" stroke-linejoin="round" points="282,470 290,462 300,458"/><polyline fill="none" stroke="#a9d6f4" stroke-width="2.2" stroke-linejoin="round" points="300,505 310,500 320,498"/><polyline fill="none" stroke="#a9d6f4" stroke-width="2.2" stroke-linejoin="round" points="680,500 690,492 700,486"/><polyline fill="none" stroke="#a9d6f4" stroke-width="2.2" stroke-linejoin="round" points="720,565 735,560 742,552"/><polyline fill="none" stroke="#a9d6f4" stroke-width="2.2" stroke-linejoin="round" points="560,580 570,574 578,570"/><polyline fill="none" stroke="#a9d6f4" stroke-width="2.2" stroke-linejoin="round" points="240,300 248,294 258,288"/><polyline fill="none" stroke="#a9d6f4" stroke-width="2.2" stroke-linejoin="round" points="900,485 910,478 925,474"/><polyline fill="none" stroke="#a9d6f4" stroke-width="2.2" stroke-linejoin="round" points="640,520 655,512 662,500"/><polyline fill="none" stroke="#a9d6f4" stroke-width="2.2" stroke-linejoin="round" points="620,360 635,356 646,348"/><polyline fill="none" stroke="#a9d6f4" stroke-width="2.2" stroke-linejoin="round" points="410,250 420,244 428,238"/><polyline fill="none" stroke="#a9d6f4" stroke-width="2.2" stroke-linejoin="round" points="980,300 990,296 1000,300"/><ellipse cx="782" cy="567" rx="8" ry="3.5" fill="#a9d6f4"/><ellipse cx="800" cy="580" rx="5" ry="4" fill="#a9d6f4"/><ellipse cx="520" cy="503" rx="10" ry="4" fill="#a9d6f4"/><ellipse cx="745" cy="395" rx="4" ry="8" fill="#a9d6f4"/><ellipse cx="542" cy="500" rx="6" ry="3" fill="#a9d6f4"/><ellipse cx="700" cy="452" rx="3" ry="6" fill="#a9d6f4"/><ellipse cx="835" cy="265" rx="5" ry="3" fill="#a9d6f4"/><circle cx="492" cy="535" r="16" fill="#e4ece0" opacity="0.6" filter="url(#bl2)"/><circle cx="823" cy="338" r="12" fill="#e4ece0" opacity="0.6" filter="url(#bl2)"/><circle cx="318" cy="562" r="10" fill="#e4ece0" opacity="0.6" filter="url(#bl2)"/><circle cx="526" cy="348" r="9" fill="#e4ece0" opacity="0.6" filter="url(#bl2)"/><circle cx="750" cy="410" r="12" fill="#e4ece0" opacity="0.6" filter="url(#bl2)"/><circle cx="1090" cy="268" r="10" fill="#e4ece0" opacity="0.6" filter="url(#bl2)"/><circle cx="427" cy="428" r="8" fill="#e4ece0" opacity="0.6" filter="url(#bl2)"/><polyline fill="none" stroke="#8a90cc" stroke-width="1.1" stroke-linejoin="round" points="112.8,301.5 230,301.5 229,285.6 320,287.5 430,290.3 536.9,293.1 750,295 1100,296.3"/><polyline fill="none" stroke="#8a90cc" stroke-width="1.1" stroke-linejoin="round" points="126.9,212.5 130.6,220 124.1,229.4 134.4,251.9 140,250 153.1,261.2 149.4,278.1 143.7,289.4 134.4,285.6 126.9,304.4 121.2,321.2 112.8,325"/><polyline fill="none" stroke="#8a90cc" stroke-width="1.1" stroke-linejoin="round" points="147.5,242.5 162.5,235 192.5,249.1 201.9,242.5 196.2,223.7 207.5,216.2 227.2,212.5"/><polyline fill="none" stroke="#8a90cc" stroke-width="1.1" stroke-linejoin="round" points="536.9,293.1 581.9,280 587.5,269.7 600.6,265 602.5,255.6 613.7,244.4 636.2,233.1 662.5,212.5"/><polyline fill="none" stroke="#8a90cc" stroke-width="1.1" stroke-linejoin="round" points="664.4,212.5 670,221.9 686.9,237.8 696.2,236.9 711.2,225.6 720.6,234.1 745,223.7 750,216.2 772.5,212.5"/><polyline fill="none" stroke="#8a90cc" stroke-width="1.1" stroke-linejoin="round" points="688.7,291.2 685,313.7 673.7,319.4 658.7,334.4 649.4,332.5 625,349.4 621.2,340 608.1,347.5 595,364.4 580,366.2 568.7,373.7 536.9,385 520,398.1 497,420 495.6,434.4"/><polyline fill="none" stroke="#8a90cc" stroke-width="1.1" stroke-linejoin="round" points="112.8,434.4 404.4,434.4 585.6,434.4 610,425 636.2,415.6 733.7,419.4 734,428 751,443 751,449.6 830.6,450.3 911.2,533.7"/><polyline fill="none" stroke="#8a90cc" stroke-width="1.1" stroke-linejoin="round" points="216.9,434.4 226.2,443.7 207.5,616.2"/><polyline fill="none" stroke="#8a90cc" stroke-width="1.1" stroke-linejoin="round" points="404.4,434.4 432,588 433.7,616.2"/><polyline fill="none" stroke="#8a90cc" stroke-width="1.1" stroke-linejoin="round" points="585.6,434.4 568.7,447.5 566.9,460.6 578.1,468.1 598.7,479.4 610,500 621.2,522.5 645.6,539.4 651.2,554.4 670,569.4 673.7,582.5 700,606.9 701.9,616.2"/><g fill="none" stroke-linejoin="round" stroke-linecap="round"><polyline stroke="#f2f5ee" stroke-width="3.6" points="113.7,212.5 122.2,235 122.7,266.9 121.2,293.1 112.8,306.2"/><polyline stroke="#f2f5ee" stroke-width="3.6" points="153.1,212.5 149.4,242.5 146.6,251.9 136.2,263.1 123.1,266.9"/><polyline stroke="#f2f5ee" stroke-width="3.6" points="168.1,212.5 183.1,242.5 186.9,250.9 207.5,256.6 226.2,249.1 252.5,239.7 272.2,236.9"/><polyline stroke="#f2f5ee" stroke-width="3.6" points="270.3,212.5 271.2,236.9 267.5,278.1"/><polyline stroke="#f2f5ee" stroke-width="3.6" points="226.2,249.1 267.5,278.1 284.4,291.2 320,319.4 321.8,332.5"/><polyline stroke="#f2f5ee" stroke-width="3.6" points="207.5,256.6 205.6,268.7 186.9,278.1 168.1,300.6 155,306.2 147.5,317.5 145.6,326.9 134.4,338.1 113.7,336.2"/><polyline stroke="#f2f5ee" stroke-width="3.6" points="311.5,212.5 323.7,229.4 342.5,257.5 348.1,255.6 376.2,246.2 385.6,212.5"/><polyline stroke="#f2f5ee" stroke-width="3.6" points="344.4,257.5 335,285.6 323.7,310 320.9,332.5 315.3,360.6 311.5,385 313.4,415 313.4,434.4 308.7,449.4 312.5,470 311.5,496.2 314.4,522.5 318.1,560 320,578.7 331.2,616.2"/><polyline stroke="#f2f5ee" stroke-width="3.6" points="113.7,405.6 141.9,388.7 205.6,364.4 260,353.1 290,343.7 320,332.5 353.7,328.7 391.2,332.5 430,334.4 461.9,355 501.2,356.9 523.7,349.4 548.1,345.6 565,340 591.2,323.1 617.5,310 651.2,291.2 675.6,278.1 730,259.4 750,260.3 757.5,248.1 781.9,244.4 808.1,225.6 815.6,212.5"/><polyline stroke="#f2f5ee" stroke-width="3.6" points="286.2,343.7 301.2,360.6 340.6,356.9 350,332.5"/><polyline stroke="#f2f5ee" stroke-width="3.6" points="340.6,355 359.4,377.5 383.7,413.1 391.2,417.5 402.5,428.7 426,430 446.9,447.5 454.4,485 465.6,503.7 480.6,518.7 488.1,531.9 492,543"/><polyline stroke="#f2f5ee" stroke-width="3.6" points="495.6,212.5 512.5,242.5 508.7,280 512.5,293.1 499.4,307.2 508.7,325 523.7,347.5"/><polyline stroke="#f2f5ee" stroke-width="3.6" points="501.2,356.9 480.6,385 460,413.1 426,430"/><polyline stroke="#f2f5ee" stroke-width="3.6" points="565,340 578.1,353.1 589.4,368.1 593.1,381.2 619.4,385 662.5,377.5 700,370 745,361.5 750,360.6 783.7,340 813.7,336.2 823.1,339 870,339 888.7,343.7 892.5,355 915,360.6 930,360.6 956.2,347.5 997.5,355 1020,346 1070,328.7"/><polyline stroke="#f2f5ee" stroke-width="3.6" points="622.2,296.9 640,317.5 625,343.7 621.2,373.7 621.2,385 636.2,413.1 662.5,434.4 673.7,473.7"/><polyline stroke="#f2f5ee" stroke-width="3.6" points="730,212.5 731.9,227.5 726.2,242.5 730,259.4 750,276.2 756.6,285.6 753.7,298.7 750,317.5 745,355 746.9,405 737.5,438.1 733.7,466.2 737.5,503.7 750,560 757.5,616.2"/><polyline stroke="#f2f5ee" stroke-width="3.6" points="753.7,298.7 768.7,306.2"/><polyline stroke="#f2f5ee" stroke-width="3.6" points="888.7,343.7 911.2,317.5 930,310 945,278.1 960,268.7 990,238.7 995.6,212.5"/><polyline stroke="#f2f5ee" stroke-width="3.6" points="1001.2,212.5 999.4,238.7 995.6,251.9 984.4,283.7 971.2,321.2 952.5,373.7 937.5,385 915,400 903.7,413.1 896.2,423.1 881.2,447.5 873.7,468.1 856.9,477.5 817.5,503.7 761.2,501.9 750,509.4 722.5,520.6 692.5,543.1 658.7,565.6 617.5,563.7 561.2,558.1 501.2,545 492,543"/><polyline stroke="#f2f5ee" stroke-width="3.6" points="870,339 881.2,353.1 900,358.7 911.2,370 913.1,400 918.7,413.1"/><polyline stroke="#f2f5ee" stroke-width="3.6" points="819.4,339 819.4,364.4 826.9,411.2 825,432.5 819.4,440 828.7,447.5"/><polyline stroke="#f2f5ee" stroke-width="3.6" points="791.2,340 787.5,366.2 766.9,385 755.6,413.1"/><polyline stroke="#f2f5ee" stroke-width="3.6" points="952.5,373.7 975,379.4 995.6,380.3"/><polyline stroke="#f2f5ee" stroke-width="3.6" points="1012.5,212.5 1050,227.5 1070,253.7 1082,266 1096,269"/><polyline stroke="#f2f5ee" stroke-width="3.6" points="112.8,446.6 126.9,453.1 143.7,465.3 158.7,475.6 175.6,492.5 201.9,500 226.2,505.6 231.9,512.2 269.4,530 282.5,535.6 299.4,550.6 318.1,560"/><polyline stroke="#f2f5ee" stroke-width="3.6" points="318.1,560 340.6,541.2 372.5,520.6 378.1,507.5 398.7,473.7 410,453.1 417.5,434.4 426,430"/><polyline stroke="#f2f5ee" stroke-width="3.6" points="318.1,560 335,557.2 363.1,554.4 410,550.6 430,548.7 480.6,541.2 492,543"/><polyline stroke="#f2f5ee" stroke-width="3.6" points="318.1,560 305,578.7 288.1,588.1 263.7,591.9 241.2,616.2"/><polyline stroke="#f2f5ee" stroke-width="3.6" points="312.5,466.2 331.2,458.7"/><polyline stroke="#f2f5ee" stroke-width="3.6" points="113.7,410 113.7,441.9"/><polyline stroke="#f2f5ee" stroke-width="3.6" points="492,543 467.5,569.4 454.4,597.5 441.2,616.2"/><polyline stroke="#f2f5ee" stroke-width="3.6" points="495.6,552.5 508.7,575 523.7,605 531.2,616.2"/><polyline stroke="#f2f5ee" stroke-width="3.6" points="480.6,518.7 491.9,488.7"/><polyline stroke="#f2f5ee" stroke-width="3.6" points="514.4,518.7 535,494.4"/><polyline stroke="#f2f5ee" stroke-width="3.6" points="492,543 514.4,518.7 561.2,498.1 591.2,477.5 628.7,458.7 662.5,438.1 711.2,413.7 718.7,410 746,405"/><polyline stroke="#f2f5ee" stroke-width="3.6" points="643.7,456.9 673.7,475.6 718.7,511.2 730,522.5 750,560 780,582.5 806.2,616.2"/><polyline stroke="#f2f5ee" stroke-width="3.6" points="636.2,410 662.5,434.4"/><polyline stroke="#f2f5ee" stroke-width="3.6" points="922.5,410 941.2,428.7 952.5,447.5 961.9,481.2 960,496.2 946.9,498.1 945.9,503.7"/><polyline stroke="#f2f5ee" stroke-width="3.6" points="877.5,430.6 881.2,421.2 896.2,421.2"/><polyline stroke="#f2f5ee" stroke-width="3.6" points="856.9,458.7 868.1,470 875.6,470"/><polyline stroke="#f2f5ee" stroke-width="3.6" points="877.5,548.7 885,541.2 901.9,531.9"/><polyline stroke="#f2f5ee" stroke-width="3.6" points="746,405 760,395 768,392 775,380"/><polyline stroke="#e9a968" stroke-width="1.75" points="113.7,212.5 122.2,235 122.7,266.9 121.2,293.1 112.8,306.2"/><polyline stroke="#e9a968" stroke-width="1.75" points="153.1,212.5 149.4,242.5 146.6,251.9 136.2,263.1 123.1,266.9"/><polyline stroke="#e9a968" stroke-width="1.75" points="168.1,212.5 183.1,242.5 186.9,250.9 207.5,256.6 226.2,249.1 252.5,239.7 272.2,236.9"/><polyline stroke="#e9a968" stroke-width="1.75" points="270.3,212.5 271.2,236.9 267.5,278.1"/><polyline stroke="#e9a968" stroke-width="1.75" points="226.2,249.1 267.5,278.1 284.4,291.2 320,319.4 321.8,332.5"/><polyline stroke="#e9a968" stroke-width="1.75" points="207.5,256.6 205.6,268.7 186.9,278.1 168.1,300.6 155,306.2 147.5,317.5 145.6,326.9 134.4,338.1 113.7,336.2"/><polyline stroke="#e9a968" stroke-width="1.75" points="311.5,212.5 323.7,229.4 342.5,257.5 348.1,255.6 376.2,246.2 385.6,212.5"/><polyline stroke="#e9a968" stroke-width="1.75" points="344.4,257.5 335,285.6 323.7,310 320.9,332.5 315.3,360.6 311.5,385 313.4,415 313.4,434.4 308.7,449.4 312.5,470 311.5,496.2 314.4,522.5 318.1,560 320,578.7 331.2,616.2"/><polyline stroke="#e9a968" stroke-width="1.75" points="113.7,405.6 141.9,388.7 205.6,364.4 260,353.1 290,343.7 320,332.5 353.7,328.7 391.2,332.5 430,334.4 461.9,355 501.2,356.9 523.7,349.4 548.1,345.6 565,340 591.2,323.1 617.5,310 651.2,291.2 675.6,278.1 730,259.4 750,260.3 757.5,248.1 781.9,244.4 808.1,225.6 815.6,212.5"/><polyline stroke="#e9a968" stroke-width="1.75" points="286.2,343.7 301.2,360.6 340.6,356.9 350,332.5"/><polyline stroke="#e9a968" stroke-width="1.75" points="340.6,355 359.4,377.5 383.7,413.1 391.2,417.5 402.5,428.7 426,430 446.9,447.5 454.4,485 465.6,503.7 480.6,518.7 488.1,531.9 492,543"/><polyline stroke="#e9a968" stroke-width="1.75" points="495.6,212.5 512.5,242.5 508.7,280 512.5,293.1 499.4,307.2 508.7,325 523.7,347.5"/><polyline stroke="#e9a968" stroke-width="1.75" points="501.2,356.9 480.6,385 460,413.1 426,430"/><polyline stroke="#e9a968" stroke-width="1.75" points="565,340 578.1,353.1 589.4,368.1 593.1,381.2 619.4,385 662.5,377.5 700,370 745,361.5 750,360.6 783.7,340 813.7,336.2 823.1,339 870,339 888.7,343.7 892.5,355 915,360.6 930,360.6 956.2,347.5 997.5,355 1020,346 1070,328.7"/><polyline stroke="#e9a968" stroke-width="1.75" points="622.2,296.9 640,317.5 625,343.7 621.2,373.7 621.2,385 636.2,413.1 662.5,434.4 673.7,473.7"/><polyline stroke="#e9a968" stroke-width="1.75" points="730,212.5 731.9,227.5 726.2,242.5 730,259.4 750,276.2 756.6,285.6 753.7,298.7 750,317.5 745,355 746.9,405 737.5,438.1 733.7,466.2 737.5,503.7 750,560 757.5,616.2"/><polyline stroke="#e9a968" stroke-width="1.75" points="753.7,298.7 768.7,306.2"/><polyline stroke="#e9a968" stroke-width="1.75" points="888.7,343.7 911.2,317.5 930,310 945,278.1 960,268.7 990,238.7 995.6,212.5"/><polyline stroke="#e9a968" stroke-width="1.75" points="1001.2,212.5 999.4,238.7 995.6,251.9 984.4,283.7 971.2,321.2 952.5,373.7 937.5,385 915,400 903.7,413.1 896.2,423.1 881.2,447.5 873.7,468.1 856.9,477.5 817.5,503.7 761.2,501.9 750,509.4 722.5,520.6 692.5,543.1 658.7,565.6 617.5,563.7 561.2,558.1 501.2,545 492,543"/><polyline stroke="#e9a968" stroke-width="1.75" points="870,339 881.2,353.1 900,358.7 911.2,370 913.1,400 918.7,413.1"/><polyline stroke="#e9a968" stroke-width="1.75" points="819.4,339 819.4,364.4 826.9,411.2 825,432.5 819.4,440 828.7,447.5"/><polyline stroke="#e9a968" stroke-width="1.75" points="791.2,340 787.5,366.2 766.9,385 755.6,413.1"/><polyline stroke="#e9a968" stroke-width="1.75" points="952.5,373.7 975,379.4 995.6,380.3"/><polyline stroke="#e9a968" stroke-width="1.75" points="1012.5,212.5 1050,227.5 1070,253.7 1082,266 1096,269"/><polyline stroke="#e9a968" stroke-width="1.75" points="112.8,446.6 126.9,453.1 143.7,465.3 158.7,475.6 175.6,492.5 201.9,500 226.2,505.6 231.9,512.2 269.4,530 282.5,535.6 299.4,550.6 318.1,560"/><polyline stroke="#e9a968" stroke-width="1.75" points="318.1,560 340.6,541.2 372.5,520.6 378.1,507.5 398.7,473.7 410,453.1 417.5,434.4 426,430"/><polyline stroke="#e9a968" stroke-width="1.75" points="318.1,560 335,557.2 363.1,554.4 410,550.6 430,548.7 480.6,541.2 492,543"/><polyline stroke="#e9a968" stroke-width="1.75" points="318.1,560 305,578.7 288.1,588.1 263.7,591.9 241.2,616.2"/><polyline stroke="#e9a968" stroke-width="1.75" points="312.5,466.2 331.2,458.7"/><polyline stroke="#e9a968" stroke-width="1.75" points="113.7,410 113.7,441.9"/><polyline stroke="#e9a968" stroke-width="1.75" points="492,543 467.5,569.4 454.4,597.5 441.2,616.2"/><polyline stroke="#e9a968" stroke-width="1.75" points="495.6,552.5 508.7,575 523.7,605 531.2,616.2"/><polyline stroke="#e9a968" stroke-width="1.75" points="480.6,518.7 491.9,488.7"/><polyline stroke="#e9a968" stroke-width="1.75" points="514.4,518.7 535,494.4"/><polyline stroke="#e9a968" stroke-width="1.75" points="492,543 514.4,518.7 561.2,498.1 591.2,477.5 628.7,458.7 662.5,438.1 711.2,413.7 718.7,410 746,405"/><polyline stroke="#e9a968" stroke-width="1.75" points="643.7,456.9 673.7,475.6 718.7,511.2 730,522.5 750,560 780,582.5 806.2,616.2"/><polyline stroke="#e9a968" stroke-width="1.75" points="636.2,410 662.5,434.4"/><polyline stroke="#e9a968" stroke-width="1.75" points="922.5,410 941.2,428.7 952.5,447.5 961.9,481.2 960,496.2 946.9,498.1 945.9,503.7"/><polyline stroke="#e9a968" stroke-width="1.75" points="877.5,430.6 881.2,421.2 896.2,421.2"/><polyline stroke="#e9a968" stroke-width="1.75" points="856.9,458.7 868.1,470 875.6,470"/><polyline stroke="#e9a968" stroke-width="1.75" points="877.5,548.7 885,541.2 901.9,531.9"/><polyline stroke="#e9a968" stroke-width="1.75" points="746,405 760,395 768,392 775,380"/></g><polyline fill="none" stroke="#f4f6f0" stroke-width="4" points="132.5,340 128.7,360.6 113.7,385"/><polyline fill="none" stroke="#e6cf5a" stroke-width="1.8" points="132.5,340 128.7,360.6 113.7,385"/><polyline fill="none" stroke="#f4f6f0" stroke-width="4" points="1020,355 1027.5,343.7 1050,336.2 1070,325 1082,318 1090,300"/><polyline fill="none" stroke="#e6cf5a" stroke-width="1.8" points="1020,355 1027.5,343.7 1050,336.2 1070,325 1082,318 1090,300"/><polyline fill="none" stroke="#f4f6f0" stroke-width="4" points="813.7,296.9 811.9,317.5"/><polyline fill="none" stroke="#e6cf5a" stroke-width="1.8" points="813.7,296.9 811.9,317.5"/><g fill="none"><ellipse cx="748" cy="412" rx="9" ry="8" stroke="#f2f5ee" stroke-width="3.6"/><ellipse cx="884" cy="426" rx="6" ry="5" stroke="#f2f5ee" stroke-width="3.6"/><ellipse cx="637.5" cy="451.5" rx="6" ry="5" stroke="#f2f5ee" stroke-width="3.6"/><ellipse cx="661.5" cy="566" rx="5" ry="6" stroke="#f2f5ee" stroke-width="3.6"/><ellipse cx="1086" cy="264" rx="5" ry="7" stroke="#f2f5ee" stroke-width="3.6"/><ellipse cx="492" cy="543" rx="8" ry="8" stroke="#f2f5ee" stroke-width="3.6"/><ellipse cx="823" cy="339" rx="6" ry="5" stroke="#f2f5ee" stroke-width="3.6"/><ellipse cx="318.5" cy="562" rx="5" ry="5" stroke="#f2f5ee" stroke-width="3.6"/><ellipse cx="748" cy="412" rx="9" ry="8" stroke="#e9a968" stroke-width="1.9"/><ellipse cx="884" cy="426" rx="6" ry="5" stroke="#e9a968" stroke-width="1.9"/><ellipse cx="637.5" cy="451.5" rx="6" ry="5" stroke="#e9a968" stroke-width="1.9"/><ellipse cx="661.5" cy="566" rx="5" ry="6" stroke="#e9a968" stroke-width="1.9"/><ellipse cx="1086" cy="264" rx="5" ry="7" stroke="#e9a968" stroke-width="1.9"/><ellipse cx="492" cy="543" rx="8" ry="8" stroke="#e9a968" stroke-width="1.9"/><ellipse cx="823" cy="339" rx="6" ry="5" stroke="#e9a968" stroke-width="1.9"/><ellipse cx="318.5" cy="562" rx="5" ry="5" stroke="#e9a968" stroke-width="1.9"/></g><circle cx="278.7" cy="298.7" r="4.7" fill="#fff" opacity="0.8"/><circle cx="278.7" cy="298.7" r="3.4" fill="#111"/><circle cx="173.7" cy="379.7" r="3.9000000000000004" fill="#fff" opacity="0.8"/><circle cx="173.7" cy="379.7" r="2.6" fill="#111"/><circle cx="526" cy="349" r="4.7" fill="#fff" opacity="0.8"/><circle cx="526" cy="349" r="3.4" fill="#111"/><circle cx="650.7" cy="292.2" r="3.9000000000000004" fill="#fff" opacity="0.8"/><circle cx="650.7" cy="292.2" r="2.6" fill="#111"/><circle cx="811.9" cy="231.6" r="3.9000000000000004" fill="#fff" opacity="0.8"/><circle cx="811.9" cy="231.6" r="2.6" fill="#111"/><circle cx="822.7" cy="339" r="4.7" fill="#fff" opacity="0.8"/><circle cx="822.7" cy="339" r="3.4" fill="#111"/><circle cx="997.1" cy="379.7" r="3.9000000000000004" fill="#fff" opacity="0.8"/><circle cx="997.1" cy="379.7" r="2.6" fill="#111"/><circle cx="334" cy="457.8" r="3.9000000000000004" fill="#fff" opacity="0.8"/><circle cx="334" cy="457.8" r="2.6" fill="#111"/><circle cx="318.5" cy="562.8" r="4.7" fill="#fff" opacity="0.8"/><circle cx="318.5" cy="562.8" r="3.4" fill="#111"/><circle cx="426.5" cy="429.6" r="4.7" fill="#fff" opacity="0.8"/><circle cx="426.5" cy="429.6" r="3.4" fill="#111"/><circle cx="491.9" cy="543.1" r="4.7" fill="#fff" opacity="0.8"/><circle cx="491.9" cy="543.1" r="3.4" fill="#111"/><circle cx="993.2" cy="456" r="3.9000000000000004" fill="#fff" opacity="0.8"/><circle cx="993.2" cy="456" r="2.6" fill="#111"/><circle cx="955.3" cy="501.9" r="3.9000000000000004" fill="#fff" opacity="0.8"/><circle cx="955.3" cy="501.9" r="2.6" fill="#111"/><circle cx="1096.6" cy="269" r="4.7" fill="#fff" opacity="0.8"/><circle cx="1096.6" cy="269" r="3.4" fill="#111"/><circle cx="1117" cy="339" r="3.9000000000000004" fill="#fff" opacity="0.8"/><circle cx="1117" cy="339" r="2.6" fill="#111"/><g font-family="Liberation Sans, sans-serif"><text x="239.4" y="290.3" font-size="17" letter-spacing="0.4" fill="#2b2b2b" font-weight="normal" stroke="#f6f8f2" stroke-width="3.2" stroke-linejoin="round" paint-order="stroke">Clarksville</text><text x="143.7" y="371" font-size="17" letter-spacing="0.1" fill="#2b2b2b" font-weight="normal" stroke="#f6f8f2" stroke-width="3.2" stroke-linejoin="round" paint-order="stroke">Jackson</text><text x="492.4" y="340.4" font-size="17" letter-spacing="0.15" fill="#2b2b2b" font-weight="normal" stroke="#f6f8f2" stroke-width="3.2" stroke-linejoin="round" paint-order="stroke">Knoxville</text><text x="625.9" y="283.7" font-size="17" letter-spacing="0.7" fill="#2b2b2b" font-weight="normal" stroke="#f6f8f2" stroke-width="3.2" stroke-linejoin="round" paint-order="stroke">Bristol</text><text x="779" y="223.2" font-size="17" letter-spacing="-0.1" fill="#2b2b2b" font-weight="normal" stroke="#f6f8f2" stroke-width="3.2" stroke-linejoin="round" paint-order="stroke">Roanoke</text><text x="779" y="330.2" font-size="17" letter-spacing="0" fill="#2b2b2b" font-weight="normal" stroke="#f6f8f2" stroke-width="3.2" stroke-linejoin="round" paint-order="stroke">Greensboro</text><text x="959" y="370.9" font-size="17" letter-spacing="0.2" fill="#2b2b2b" font-weight="normal" stroke="#f6f8f2" stroke-width="3.2" stroke-linejoin="round" paint-order="stroke">Greenville</text><text x="297.5" y="448.4" font-size="17" letter-spacing="0.35" fill="#2b2b2b" font-weight="normal" stroke="#f6f8f2" stroke-width="3.2" stroke-linejoin="round" paint-order="stroke">Huntsville</text><text x="215.9" y="556.6" font-size="17" letter-spacing="0.55" fill="#2b2b2b" font-weight="normal" stroke="#f6f8f2" stroke-width="3.2" stroke-linejoin="round" paint-order="stroke">Birmingham</text><text x="379" y="421" font-size="17" letter-spacing="-0.1" fill="#2b2b2b" font-weight="normal" stroke="#f6f8f2" stroke-width="3.2" stroke-linejoin="round" paint-order="stroke">Chattanooga</text><text x="501.2" y="536" font-size="19" letter-spacing="0.3" fill="#2b2b2b" font-weight="normal" stroke="#f6f8f2" stroke-width="3.2" stroke-linejoin="round" paint-order="stroke">Atlanta</text><text x="522.8" y="612.5" font-size="17" letter-spacing="0" fill="#2b2b2b" font-weight="normal" stroke="#f6f8f2" stroke-width="3.2" stroke-linejoin="round" paint-order="stroke">Macon</text><text x="947.8" y="446.6" font-size="17" letter-spacing="0.2" fill="#2b2b2b" font-weight="normal" stroke="#f6f8f2" stroke-width="3.2" stroke-linejoin="round" paint-order="stroke">Jacksonville</text><text x="912.2" y="492.5" font-size="17" letter-spacing="0.5" fill="#2b2b2b" font-weight="normal" stroke="#f6f8f2" stroke-width="3.2" stroke-linejoin="round" paint-order="stroke">Wilmington</text><text x="820.3" y="621" font-size="17" letter-spacing="0.1" fill="#2b2b2b" font-weight="normal" stroke="#f6f8f2" stroke-width="3.2" stroke-linejoin="round" paint-order="stroke">Charleston</text><text x="1103.5" y="287.5" font-size="17" letter-spacing="0.2" fill="#2b2b2b" font-weight="normal" stroke="#f6f8f2" stroke-width="3.2" stroke-linejoin="round" paint-order="stroke">Virginia Beach</text><text x="1077.5" y="330.5" font-size="17" letter-spacing="0" fill="#2b2b2b" font-weight="normal" stroke="#f6f8f2" stroke-width="3.2" stroke-linejoin="round" paint-order="stroke">Kitty Hawk</text><text x="320.5" y="352.4" font-size="17" letter-spacing="1.95" fill="#7b7b7b" font-weight="bold" stroke="#f6f8f2" stroke-width="2.5" stroke-linejoin="round" paint-order="stroke">TENNESSEE</text><text x="819.8" y="379.6" font-size="17" letter-spacing="2.2" fill="#7b7b7b" font-weight="bold" stroke="#f6f8f2" stroke-width="2.5" stroke-linejoin="round" paint-order="stroke">NORTH</text><text x="802" y="401.1" font-size="17" letter-spacing="1.8" fill="#7b7b7b" font-weight="bold" stroke="#f6f8f2" stroke-width="2.5" stroke-linejoin="round" paint-order="stroke">CAROLINA</text><text x="711.5" y="522.7" font-size="17" letter-spacing="2.05" fill="#7b7b7b" font-weight="bold" stroke="#f6f8f2" stroke-width="2.5" stroke-linejoin="round" paint-order="stroke">SOUTH</text><text x="693.5" y="543.7" font-size="17" letter-spacing="1.95" fill="#7b7b7b" font-weight="bold" stroke="#f6f8f2" stroke-width="2.5" stroke-linejoin="round" paint-order="stroke">CAROLINA</text><text x="380" y="216" font-size="16" letter-spacing="4" fill="#7b7b7b" font-weight="bold" stroke="#f6f8f2" stroke-width="2.5" stroke-linejoin="round" paint-order="stroke">KENTUCKY</text><text x="58" y="624" font-size="16" letter-spacing="3" fill="#7b7b7b" font-weight="bold" stroke="#f6f8f2" stroke-width="2.5" stroke-linejoin="round" paint-order="stroke">MISSISSIPPI</text></g><path d="M746.4,446.8 C742,441 733.9,436 733.9,428.6 A12.5,12.5 0 1 1 758.9,428.6 C758.9,436 751,441 746.4,446.8 Z" fill="#9a5c3f"/><path d="M131,520.6 V553 H206.5 V520.6" fill="rgba(246,246,240,0.85)" stroke="#333" stroke-width="2.6"/><text x="141" y="541.2" font-family="Liberation Sans, sans-serif" font-size="15" fill="#333">100 km</text><circle cx="140.7" cy="588.7" r="15.4" fill="#fff" stroke="#87998a" stroke-width="2.2"/><path d="M132.7,596.5 L132.7,588.7 A8,8 0 1 1 140.7,596.7 Z" fill="#87998a"/><path d="M140.7,583.6 L142,587.4 L145.8,588.7 L142,590 L140.7,593.8 L139.4,590 L135.6,588.7 L139.4,587.4 Z" fill="#fff"/><text transform="translate(160.5,597.8) scale(0.93,0.93)" font-family="Liberation Sans, sans-serif" font-weight="bold" font-size="29" letter-spacing="-1.2" fill="#fff" stroke="#87998a" stroke-width="3.4" paint-order="stroke" stroke-linejoin="round">mapbox</text></svg><div class="abs" style="left:1449px;top:461px;width:51px;height:142px;border:2px solid #e4e4e4;border-radius:9px;background:#fff"></div><div class="abs" style="left:1451px;top:508.5px;width:47px;height:1px;background:#e6e6e6"></div><div class="abs" style="left:1451px;top:554.5px;width:47px;height:1px;background:#e6e6e6"></div><svg class="abs" style="left:1449px;top:461px" width="51" height="142" viewBox="0 0 51 142"><path d="M16,25.5 H34 M25,16.5 V34.5" stroke="#333" stroke-width="3.6" stroke-linecap="round"/><path d="M16,71.5 H34" stroke="#333" stroke-width="3.6" stroke-linecap="round"/><path d="M25,105 L31,116 H19 Z" fill="#333"/><path d="M25,132 L31,121 H19 Z" fill="#c8c8c8"/></svg></body></html>
